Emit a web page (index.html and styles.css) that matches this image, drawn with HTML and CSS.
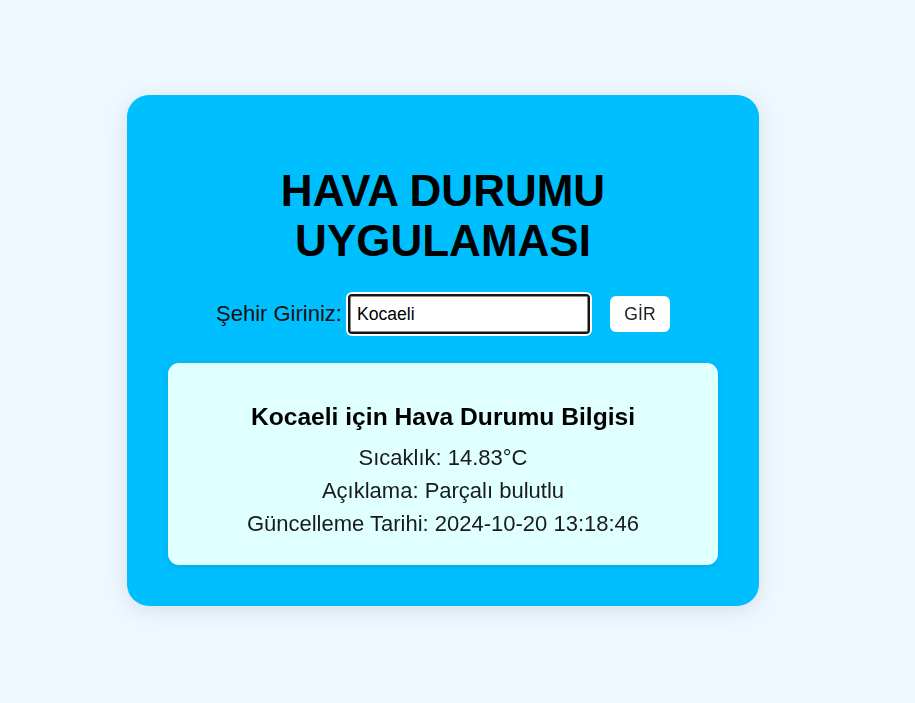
FILE: index.html
```html
<!DOCTYPE html>
<html lang="tr">
<head>
<meta charset="utf-8">
<title>Hava Durumu Uygulaması</title>
<link rel="stylesheet" href="styles.css">
</head>
<body>
<main class="page">
  <section class="card">
    <h1 class="title">HAVA DURUMU UYGULAMASI</h1>
    <form class="search" onsubmit="return false">
      <label class="search-label" for="city">Şehir Giriniz:</label>
      <input class="search-input" id="city" type="text" value="Kocaeli" autofocus>
      <button class="search-btn" type="submit">GİR</button>
    </form>
    <div class="result">
      <h3 class="result-title">Kocaeli için Hava Durumu Bilgisi</h3>
      <p class="result-line">Sıcaklık: 14.83°C</p>
      <p class="result-line">Açıklama: Parçalı bulutlu</p>
      <p class="result-line">Güncelleme Tarihi: 2024-10-20 13:18:46</p>
    </div>
  </section>
</main>
</body>
</html>
```

FILE: styles.css
```css
html, body {
  margin: 0;
  padding: 0;
  background: #f0f8ff;
  font-family: "Liberation Sans", Arial, sans-serif;
}

.page {
  padding: 95px 0 0 127px;
  min-height: 608px;
}

.card {
  width: 550px;
  padding: 41px;
  background: #00bfff;
  border-radius: 22px;
  box-shadow: 0 4px 22px rgba(0, 0, 0, 0.1);
  text-align: center;
}

.title {
  margin: 30px 0 28px;
  font-size: 44px;
  font-weight: bold;
  color: #000;
}

.search {
  display: flex;
  align-items: center;
  justify-content: center;
}

.search-label {
  font-size: 22px;
  color: #111;
  margin-right: 6px;
}

.search-input {
  box-sizing: border-box;
  width: 242px;
  height: 40px;
  padding: 0 7px;
  border: 2px solid #151515;
  border-radius: 4px;
  box-shadow: 0 0 0 2px #fff, inset 0 0 0 1px #8a8a8a;
  font-family: "Liberation Sans", Arial, sans-serif;
  font-size: 17.6px;
  color: #000;
  background: #fff;
  outline: none;
}

.search-btn {
  margin-left: 20px;
  width: 60px;
  height: 36px;
  border: none;
  border-radius: 6px;
  background: #fff;
  font-family: "Liberation Sans", Arial, sans-serif;
  font-size: 17.6px;
  color: #222;
  padding: 0;
}

.result {
  margin-top: 29px;
  padding: 22px;
  background: #e0ffff;
  border-radius: 11px;
  box-shadow: 0 2px 8px rgba(0, 0, 0, 0.1);
}

.result-title {
  margin: 18px 0 14px;
  font-size: 24.6px;
  line-height: 28px;
  font-weight: bold;
  color: #000;
}

.result-line {
  margin: 8px 0;
  font-size: 22px;
  line-height: 25px;
  color: #1a1a1a;
}

.result-line:last-child {
  margin-bottom: 7px;
}
```
